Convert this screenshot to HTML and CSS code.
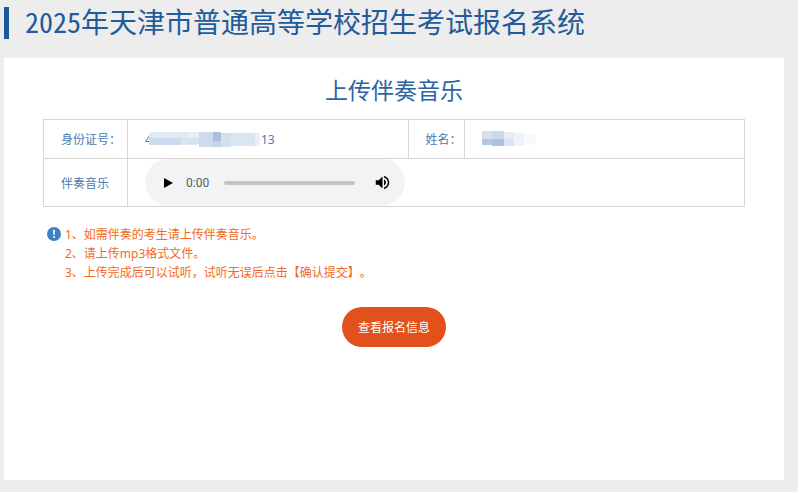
FILE: index.html
```html
<!DOCTYPE html>
<html lang="zh-CN">
<head>
    <meta charset="UTF-8">
    <meta name="viewport" content="width=device-width, initial-scale=1.0">
    <title>2025年天津市普通高等学校招生考试报名系统</title>
    <link rel="stylesheet" href="styles.css">
</head>
<body>
    <div class="page">
        <header class="header">
            <h1>2025年天津市普通高等学校招生考试报名系统</h1>
        </header>
        <main class="panel">
            <h2>上传伴奏音乐</h2>
            <table class="info">
                <tr>
                    <th class="col-label" scope="row">身份证号：</th>
                    <td class="col-value">
                        <div class="masked">
                            <span>4</span>
                            <svg class="mask mask-id" width="112" height="18" viewBox="0 0 112 18" aria-hidden="true">
                                <rect x="0" y="2" width="50" height="13" rx="3" fill="#dfe8f3"/>
                                <rect x="0" y="8" width="32" height="7" fill="#cbdaed"/>
                                <rect x="32" y="8" width="18" height="6" fill="#d7e2f0"/>
                                <rect x="38" y="2" width="12" height="6" fill="#e9eff7"/>
                                <rect x="50" y="2" width="14" height="15" fill="#cfdbec"/>
                                <rect x="64" y="2" width="8" height="9" fill="#aac0dd"/>
                                <rect x="64" y="11" width="8" height="6" fill="#c4d3e8"/>
                                <rect x="72" y="3" width="10" height="14" fill="#d3e0f0"/>
                                <rect x="82" y="3" width="24" height="13" fill="#dae5f2"/>
                                <rect x="106" y="3" width="5" height="13" fill="#eaf0f7"/>
                            </svg>
                            <span>13</span>
                        </div>
                    </td>
                    <th class="col-name" scope="row">姓名：</th>
                    <td>
                        <svg class="mask" width="56" height="18" viewBox="0 0 56 18" aria-hidden="true">
                            <rect x="0" y="1" width="10" height="8" fill="#d6e1f0"/>
                            <rect x="0" y="9" width="10" height="6" fill="#b2c7e2"/>
                            <rect x="10" y="1" width="12" height="8" fill="#c9d8eb"/>
                            <rect x="10" y="9" width="12" height="7" fill="#adc2df"/>
                            <rect x="22" y="2" width="10" height="7" fill="#e6edf6"/>
                            <rect x="22" y="9" width="10" height="7" fill="#dce6f2"/>
                            <rect x="32" y="3" width="10" height="13" fill="#eff3f9"/>
                            <rect x="42" y="4" width="12" height="11" fill="#f8fafc"/>
                        </svg>
                    </td>
                </tr>
                <tr>
                    <th scope="row">伴奏音乐</th>
                    <td colspan="3">
                        <div class="player">
                            <button class="icon-btn" type="button" aria-label="播放">
                                <svg width="10" height="12" viewBox="0 0 10 12"><path d="M1 1v10l9-5z"/></svg>
                            </button>
                            <span class="time">0:00</span>
                            <input class="seek" type="range" min="0" max="100" value="0" aria-label="播放进度">
                            <button class="icon-btn" type="button" aria-label="音量">
                                <svg width="15" height="15" viewBox="2 2 20 20"><path d="M3 9v6h4l5 5V4L7 9H3zm13.5 3c0-1.77-1.02-3.29-2.5-4.03v8.05c1.48-.73 2.5-2.25 2.5-4.02zM14 3.23v2.06c2.89.86 5 3.54 5 6.71s-2.11 5.85-5 6.71v2.06c4.01-.91 7-4.49 7-8.77s-2.99-7.86-7-8.77z"/></svg>
                            </button>
                        </div>
                    </td>
                </tr>
            </table>
            <div class="notes">
                <svg width="14" height="14" viewBox="0 0 14 14" aria-hidden="true">
                    <circle cx="7" cy="7" r="7" fill="#3b83c4"/>
                    <path d="M6 3h2l-.4 5H6.400z" fill="#fff"/>
                    <circle cx="7" cy="10" r="1" fill="#fff"/>
                </svg>
                <div>
                    <p>1、如需伴奏的考生请上传伴奏音乐。</p>
                    <p>2、请上传mp3格式文件。</p>
                    <p>3、上传完成后可以试听，试听无误后点击【确认提交】。</p>
                </div>
            </div>
            <div class="actions">
                <button class="submit" type="button">查看报名信息</button>
            </div>
        </main>
    </div>
</body>
</html>
```

FILE: styles.css
```css
* {
    box-sizing: border-box;
}
body {
    margin: 0;
    min-height: 100vh;
    padding: 0 2px 2px 0;
    display: flex;
    background: #fff;
    font-family: "Noto Sans", "Noto Sans CJK SC", sans-serif;
    font-size: 12px;
    text-spacing-trim: space-all;
    color: #4a7ab5;
}
.page {
    flex: 1;
    display: flex;
    flex-direction: column;
    padding: 7px 14px 12px 4px;
    background: #ededed;
}
h1 {
    margin: 0 0 19px;
    padding: 0 0 4px 16px;
    border-left: 5px solid #1a5a96;
    font-family: "Noto Sans CJK SC", sans-serif;
    font-size: 28px;
    font-weight: normal;
    font-feature-settings: "hwid";
    line-height: 28px;
    color: #1f5c99;
}
.panel {
    flex: 1;
    padding: 16px 39px;
    background: #fff;
}
h2 {
    margin: 0 0 13px;
    font-size: 23px;
    font-weight: normal;
    line-height: 32px;
    text-align: center;
    color: #2c64a3;
}
.info {
    width: 100%;
    table-layout: fixed;
    border-collapse: collapse;
}
.info th,
.info td {
    height: 39px;
    padding: 0 0 0 17px;
    border: 1px solid #d6d6d6;
    font-weight: normal;
    text-align: left;
    white-space: nowrap;
}
.col-label {
    width: 12%;
}
.col-value {
    width: 40%;
}
.col-name {
    width: 8%;
}
.masked {
    display: flex;
    align-items: center;
}
.mask {
    display: block;
}
.mask-id {
    margin-left: -3px;
}
.player {
    display: flex;
    align-items: center;
    width: 260px;
    height: 47px;
    padding: 0 14px;
    border-radius: 24px;
    background: #f1f3f4;
}
.icon-btn {
    display: flex;
    justify-content: center;
    width: 18px;
    padding: 0;
    border: none;
    background: none;
    cursor: pointer;
}
.time {
    margin: 0 15px 0 9px;
    font-family: Roboto, sans-serif;
    font-size: 12px;
    color: #5a5a5a;
}
.seek {
    flex: 1;
    min-width: 0;
    height: 4px;
    margin: 0 18px 0 0;
    border-radius: 2px;
    background: #c4c4c4;
    appearance: none;
}
.seek::-webkit-slider-thumb {
    width: 0;
    height: 0;
    appearance: none;
}
.notes {
    display: flex;
    gap: 4px;
    margin-top: 18px;
    padding-left: 4px;
    line-height: 19px;
    color: #f26a21;
}
.notes svg {
    margin-top: 2px;
}
.notes p {
    margin: 0;
}
.actions {
    margin-top: 25px;
    text-align: center;
}
.submit {
    height: 40px;
    padding: 0 16px;
    border: none;
    border-radius: 20px;
    background: #e2501c;
    color: #fff;
    font: inherit;
    cursor: pointer;
}
```
